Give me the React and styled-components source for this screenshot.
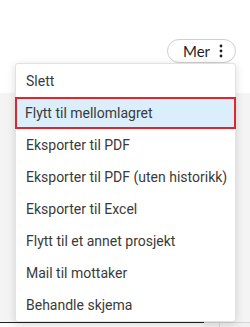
import React from "react";
import styled, { createGlobalStyle } from "styled-components";

const GlobalStyle = createGlobalStyle`
  html, body {
    margin: 0;
    padding: 0;
    background: #ffffff;
    font-family: "Roboto", "Noto Sans", sans-serif;
  }
`;

const Page = styled.div`
  position: relative;
  width: 250px;
  height: 327px;
  overflow: hidden;
  display: flex;
  flex-direction: column;
`;

const Header = styled.div`
  height: 93px;
  background: #ffffff;
  display: flex;
  justify-content: flex-end;
  align-items: flex-start;
  padding: 39px 14px 0 0;
  box-sizing: border-box;
`;

const MoreButton = styled.button`
  height: 24px;
  width: 69px;
  box-sizing: border-box;
  border: 1px solid #cfcfcf;
  border-radius: 12px;
  background: #ffffff;
  display: flex;
  align-items: center;
  padding: 0 0 0 15px;
  gap: 9px;
  font-family: "Lato", sans-serif;
  font-size: 15px;
  color: #1f1f1f;
  cursor: pointer;
`;

const Content = styled.div`
  flex: 1;
  background: #f4f4f4;
  display: flex;
  flex-direction: column;
  justify-content: flex-end;
`;

const TableEdge = styled.div`
  height: 5px;
  display: flex;
`;

const EdgeCell = styled.div`
  width: ${p => p.w}px;
  border-top: 1px solid ${p => p.dark ? "#222" : "#d6d6d6"};
  border-right: ${p => p.divider ? "1px solid #d6d6d6" : "none"};
  background: ${p => p.dark ? "#fafafa" : "#f0f0f0"};
`;

const Menu = styled.ul`
  position: absolute;
  top: 63px;
  left: 15px;
  width: 221px;
  margin: 0;
  padding: 1px 0 0;
  list-style: none;
  background: #ffffff;
  border: 1px solid #e2e2e2;
  border-radius: 3px;
  box-sizing: border-box;
  box-shadow: 0 2px 8px rgba(0, 0, 0, 0.14);
`;

const Item = styled.li`
  height: 32px;
  display: flex;
  align-items: center;
  padding-left: ${p => p.active ? "8px" : "10px"};
  margin: ${p => p.active ? "0 -1px" : "0"};
  font-size: 14px;
  color: #3a3a3a;
  white-space: nowrap;
  background: ${p => p.active ? "#dbeefc" : "transparent"};
  border: ${p => p.active ? "2px solid #e0262b" : "none"};
  box-sizing: border-box;
`;

const Kebab = () => (
  <svg width="4" height="14" viewBox="0 0 4 14">
    <circle cx="2" cy="2" r="1.4" fill="#1f1f1f" />
    <circle cx="2" cy="7" r="1.4" fill="#1f1f1f" />
    <circle cx="2" cy="12" r="1.4" fill="#1f1f1f" />
  </svg>
);

const items = [
  "Slett",
  "Flytt til mellomlagret",
  "Eksporter til PDF",
  "Eksporter til PDF (uten historikk)",
  "Eksporter til Excel",
  "Flytt til et annet prosjekt",
  "Mail til mottaker",
  "Behandle skjema"
];

export default () => (
  <Page>
    <GlobalStyle />
    <Header>
      <MoreButton>
        Mer <Kebab />
      </MoreButton>
    </Header>
    <Content>
      <TableEdge>
        <EdgeCell w={205} dark />
        <EdgeCell w={15} divider />
        <EdgeCell w={30} />
      </TableEdge>
    </Content>
    <Menu>
      {items.map((text, i) => (
        <Item key={text} active={i === 1}>
          {text}
        </Item>
      ))}
    </Menu>
  </Page>
);
